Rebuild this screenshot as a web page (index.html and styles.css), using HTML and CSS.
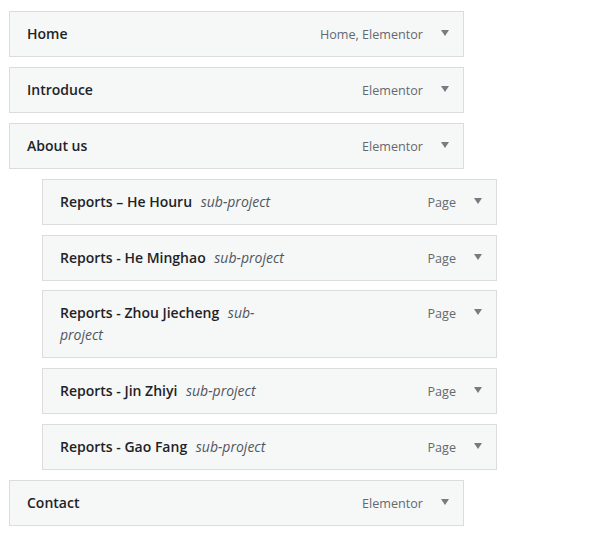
FILE: index.html
```html
<!DOCTYPE html>
<html lang="en">
<head>
<meta charset="utf-8">
<title>Menu structure</title>
<link rel="stylesheet" href="styles.css">
</head>
<body>
<ul class="menu">
  <li class="item">
    <div class="handle">
      <span class="title"><span class="name">Home</span></span>
      <span class="controls"><span class="type">Home, Elementor</span><span class="arrow"></span></span>
    </div>
  </li>
  <li class="item">
    <div class="handle">
      <span class="title"><span class="name">Introduce</span></span>
      <span class="controls"><span class="type">Elementor</span><span class="arrow"></span></span>
    </div>
  </li>
  <li class="item">
    <div class="handle">
      <span class="title"><span class="name">About us</span></span>
      <span class="controls"><span class="type">Elementor</span><span class="arrow"></span></span>
    </div>
  </li>
  <li class="item sub">
    <div class="handle">
      <span class="title"><span class="name">Reports – He Houru</span> <span class="submenu">sub-project</span></span>
      <span class="controls"><span class="type">Page</span><span class="arrow"></span></span>
    </div>
  </li>
  <li class="item sub">
    <div class="handle">
      <span class="title"><span class="name">Reports - He Minghao</span> <span class="submenu">sub-project</span></span>
      <span class="controls"><span class="type">Page</span><span class="arrow"></span></span>
    </div>
  </li>
  <li class="item sub">
    <div class="handle">
      <span class="title"><span class="name">Reports - Zhou Jiecheng</span> <span class="submenu">sub-project</span></span>
      <span class="controls"><span class="type">Page</span><span class="arrow"></span></span>
    </div>
  </li>
  <li class="item sub">
    <div class="handle">
      <span class="title"><span class="name">Reports - Jin Zhiyi</span> <span class="submenu">sub-project</span></span>
      <span class="controls"><span class="type">Page</span><span class="arrow"></span></span>
    </div>
  </li>
  <li class="item sub">
    <div class="handle">
      <span class="title"><span class="name">Reports - Gao Fang</span> <span class="submenu">sub-project</span></span>
      <span class="controls"><span class="type">Page</span><span class="arrow"></span></span>
    </div>
  </li>
  <li class="item">
    <div class="handle">
      <span class="title"><span class="name">Contact</span></span>
      <span class="controls"><span class="type">Elementor</span><span class="arrow"></span></span>
    </div>
  </li>
</ul>
</body>
</html>
```
FILE: styles.css
```css
html, body {
  margin: 0;
  padding: 0;
  background: #ffffff;
}

body {
  font-family: "Open Sans", "Noto Sans", sans-serif;
  color: #1d2327;
}

.menu {
  list-style: none;
  margin: 0;
  padding: 11px 0 0 9px;
  display: flex;
  flex-direction: column;
  gap: 9.875px;
}

.item {
  width: 455px;
}

.item.sub {
  margin-left: 33px;
}

.handle {
  box-sizing: border-box;
  width: 455px;
  display: flex;
  align-items: flex-start;
  padding: 11px 14px 11px 17px;
  border: 1px solid #dcdcde;
  background: #f6f7f7;
  line-height: 22px;
}

.title {
  width: 230px;
  font-size: 14px;
}

.name {
  font-weight: 600;
  color: #1d2327;
}

.submenu {
  padding-left: 5px;
  font-style: italic;
  font-weight: 400;
  color: #50575e;
}

.controls {
  margin-left: auto;
  display: flex;
  align-items: center;
  height: 22px;
}

.type {
  font-size: 12.6px;
  color: #646970;
  margin-top: 2px;
}

.arrow {
  width: 0;
  height: 0;
  margin-left: 18px;
  border-left: 4px solid transparent;
  border-right: 4px solid transparent;
  border-top: 6px solid #787c82;
  margin-top: -2px;
}
```
